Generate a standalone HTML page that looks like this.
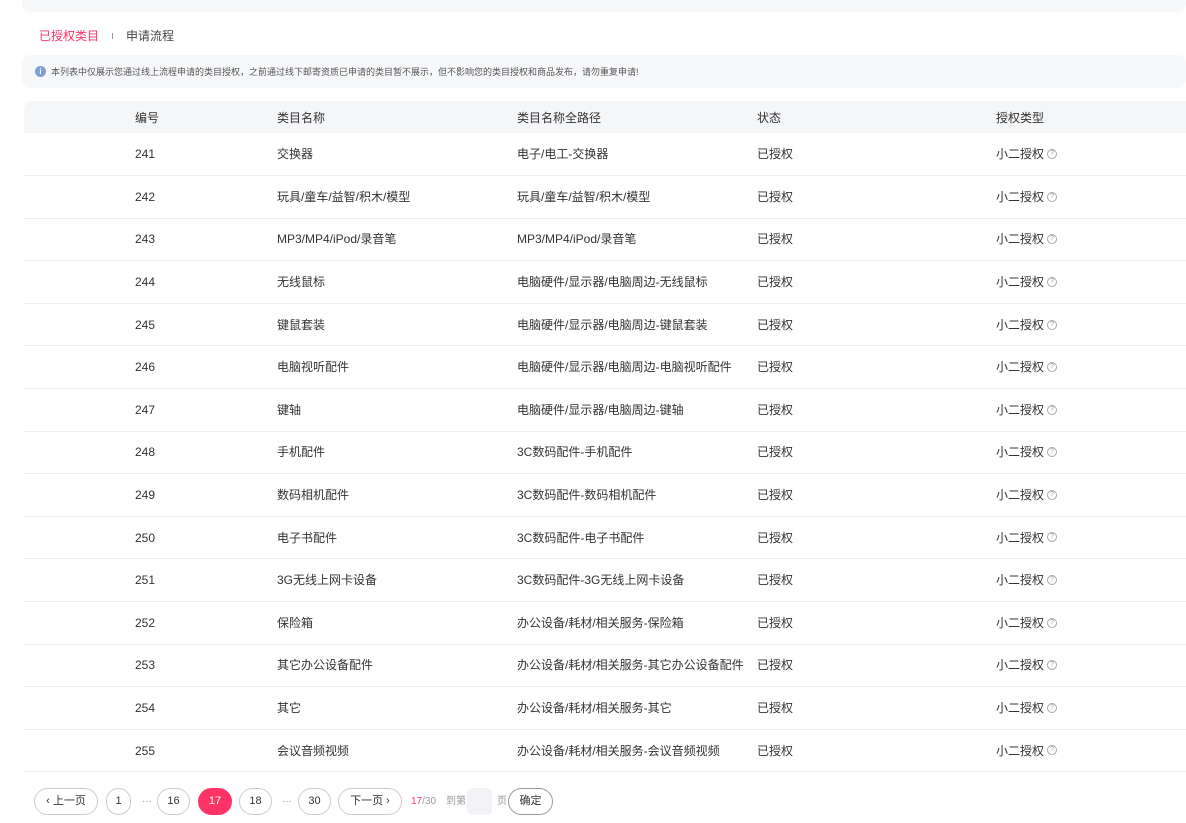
<!DOCTYPE html><html><head><meta charset="utf-8"><style>
*{box-sizing:border-box;margin:0;padding:0}
body{width:1186px;height:823px;background:#fff;font-family:"Liberation Sans","Noto Sans CJK SC",sans-serif;font-size:12px;color:#333;position:relative;overflow:hidden}
.top{position:absolute;left:22px;right:0;top:-10px;height:22px;background:#f7f8fa;border-radius:8px}
.tabs{position:absolute;top:27px;left:39px;font-size:12px;display:flex;align-items:center}
.tabs .a{color:#ff3366}.tabs .sep{width:1px;height:6px;background:#999;margin:0 13px}.tabs .b{color:#444}
.notice{position:absolute;left:22px;right:0;top:55px;height:33px;background:#f7f8fa;border-radius:8px;display:flex;align-items:center;padding-left:13px;font-size:9px;color:#555;white-space:nowrap}
.notice i{width:11px;height:11px;border-radius:50%;background:#7f9ed6;color:#fff;font-style:normal;font-size:8px;text-align:center;line-height:11px;margin-right:5px;font-weight:bold}
table{position:absolute;left:24px;top:101px;width:1162px;border-collapse:collapse}
th{background:#f5f6f8;height:32px;font-weight:normal;text-align:left;color:#333;vertical-align:middle}
th:first-child{border-top-left-radius:8px}
td{height:42.6px;border-bottom:1px solid #eef0f3;color:#333;vertical-align:middle;line-height:14px}
th:nth-child(1),td:nth-child(1){padding-left:111px;width:253px}
th:nth-child(2),td:nth-child(2){width:240px}
th:nth-child(3),td:nth-child(3){width:240px}
th:nth-child(4),td:nth-child(4){width:239px}
.q{display:inline-block;width:10px;height:10px;border:1px solid #aaa;border-radius:50%;font-size:7px;color:#999;text-align:center;line-height:8px;margin-left:3px;vertical-align:middle;position:relative;top:-1px}
.pg{position:absolute;top:788px;left:0;height:27px}
.pg span{position:absolute;top:0;height:27px;line-height:25px;border:1px solid #ccc;border-radius:14px;text-align:center;font-size:11px;color:#333;white-space:nowrap}
.pg span.cur{background:#ff3366;border-color:#ff3366;color:#fff}
.pg em{position:absolute;top:0;line-height:27px;font-style:normal;font-size:10px;color:#999;white-space:nowrap}
</style></head><body>
<div class="top"></div>
<div class="tabs"><span class="a">已授权类目</span><span class="sep"></span><span class="b">申请流程</span></div>
<div class="notice"><i>i</i>本列表中仅展示您通过线上流程申请的类目授权，之前通过线下邮寄资质已申请的类目暂不展示，但不影响您的类目授权和商品发布，请勿重复申请!</div>
<table>
<tr><th>编号</th><th>类目名称</th><th>类目名称全路径</th><th>状态</th><th>授权类型</th></tr>
<tr><td>241</td><td>交换器</td><td>电子/电工-交换器</td><td>已授权</td><td>小二授权<span class="q">?</span></td></tr>
<tr><td>242</td><td>玩具/童车/益智/积木/模型</td><td>玩具/童车/益智/积木/模型</td><td>已授权</td><td>小二授权<span class="q">?</span></td></tr>
<tr><td>243</td><td>MP3/MP4/iPod/录音笔</td><td>MP3/MP4/iPod/录音笔</td><td>已授权</td><td>小二授权<span class="q">?</span></td></tr>
<tr><td>244</td><td>无线鼠标</td><td>电脑硬件/显示器/电脑周边-无线鼠标</td><td>已授权</td><td>小二授权<span class="q">?</span></td></tr>
<tr><td>245</td><td>键鼠套装</td><td>电脑硬件/显示器/电脑周边-键鼠套装</td><td>已授权</td><td>小二授权<span class="q">?</span></td></tr>
<tr><td>246</td><td>电脑视听配件</td><td>电脑硬件/显示器/电脑周边-电脑视听配件</td><td>已授权</td><td>小二授权<span class="q">?</span></td></tr>
<tr><td>247</td><td>键轴</td><td>电脑硬件/显示器/电脑周边-键轴</td><td>已授权</td><td>小二授权<span class="q">?</span></td></tr>
<tr><td>248</td><td>手机配件</td><td>3C数码配件-手机配件</td><td>已授权</td><td>小二授权<span class="q">?</span></td></tr>
<tr><td>249</td><td>数码相机配件</td><td>3C数码配件-数码相机配件</td><td>已授权</td><td>小二授权<span class="q">?</span></td></tr>
<tr><td>250</td><td>电子书配件</td><td>3C数码配件-电子书配件</td><td>已授权</td><td>小二授权<span class="q">?</span></td></tr>
<tr><td>251</td><td>3G无线上网卡设备</td><td>3C数码配件-3G无线上网卡设备</td><td>已授权</td><td>小二授权<span class="q">?</span></td></tr>
<tr><td>252</td><td>保险箱</td><td>办公设备/耗材/相关服务-保险箱</td><td>已授权</td><td>小二授权<span class="q">?</span></td></tr>
<tr><td>253</td><td>其它办公设备配件</td><td>办公设备/耗材/相关服务-其它办公设备配件</td><td>已授权</td><td>小二授权<span class="q">?</span></td></tr>
<tr><td>254</td><td>其它</td><td>办公设备/耗材/相关服务-其它</td><td>已授权</td><td>小二授权<span class="q">?</span></td></tr>
<tr><td>255</td><td>会议音频视频</td><td>办公设备/耗材/相关服务-会议音频视频</td><td>已授权</td><td>小二授权<span class="q">?</span></td></tr>
</table>
<div class="pg">
<span style="left:34px;width:64px">‹ 上一页</span>
<span style="left:106px;width:25px">1</span>
<em style="left:142px">···</em>
<span style="left:157px;width:33px">16</span>
<span class="cur" style="left:198px;width:34px">17</span>
<span style="left:239px;width:33px">18</span>
<em style="left:282px">···</em>
<span style="left:298px;width:33px">30</span>
<span style="left:338px;width:64px">下一页 ›</span>
<em style="left:411px"><b style="color:#ff3366;font-weight:normal">17</b>/30</em>
<em style="left:446px">到第</em>
<div style="position:absolute;left:467px;top:0;width:25px;height:27px;background:#f2f3f6;border-radius:5px"></div>
<em style="left:497px">页</em>
<span style="left:508px;width:45px;border-color:#999">确定</span>
</div>
</body></html>
